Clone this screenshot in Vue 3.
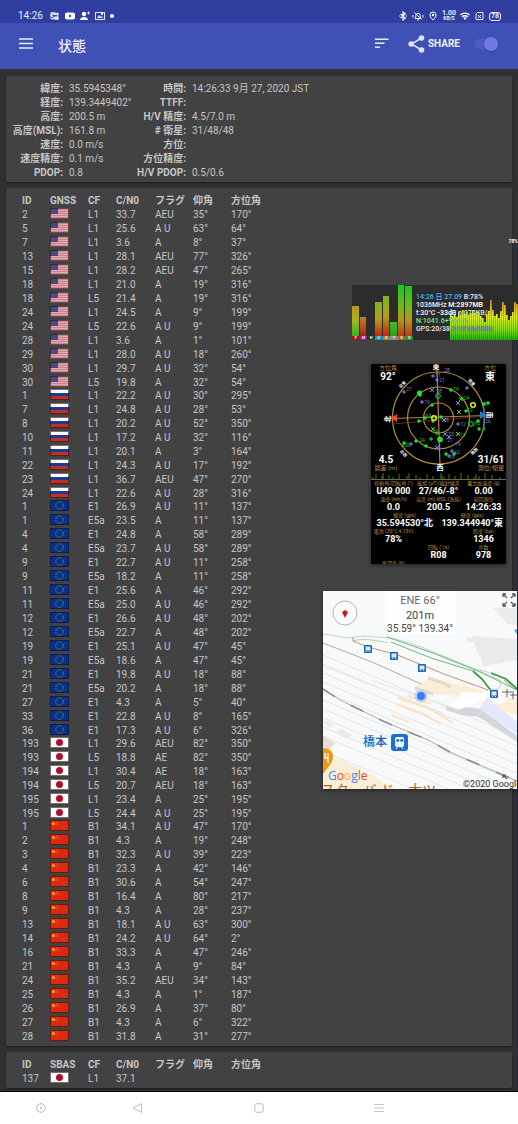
<script setup>
const info = [
  ['緯度:', '35.5945348°', '時間:', '14:26:33 9月 27, 2020 JST'],
  ['経度:', '139.3449402°', 'TTFF:', ''],
  ['高度:', '200.5 m', 'H/V 精度:', '4.5/7.0 m'],
  ['高度(MSL):', '161.8 m', '# 衛星:', '31/48/48'],
  ['速度:', '0.0 m/s', '方位:', ''],
  ['速度精度:', '0.1 m/s', '方位精度:', ''],
  ['PDOP:', '0.8', 'H/V PDOP:', '0.5/0.6'],
]

const parse = (text) => text.trim().split('\n').map((l) => l.trim().split(','))

const gnss = [
  { flag: 'us', name: 'GPS', rows: parse(`2,L1,33.7,AEU,35,170
    5,L1,25.6,A U,63,64
    7,L1,3.6,A,8,37
    13,L1,28.1,AEU,77,326
    15,L1,28.2,AEU,47,265
    18,L1,21.0,A,19,316
    18,L5,21.4,A,19,316
    24,L1,24.5,A,9,199
    24,L5,22.6,A U,9,199
    28,L1,3.6,A,1,101
    29,L1,28.0,A U,18,260
    30,L1,29.7,A U,32,54
    30,L5,19.8,A,32,54`) },
  { flag: 'ru', name: 'GLONASS', rows: parse(`1,L1,22.2,A U,30,295
    7,L1,24.8,A U,28,53
    8,L1,20.2,A U,52,350
    10,L1,17.2,A U,32,116
    11,L1,20.1,A,3,164
    22,L1,24.3,A U,17,192
    23,L1,36.7,AEU,47,270
    24,L1,22.6,A U,28,316`) },
  { flag: 'eu', name: 'Galileo', rows: parse(`1,E1,26.9,A U,11,137
    1,E5a,23.5,A,11,137
    4,E1,24.8,A,58,289
    4,E5a,23.7,A U,58,289
    9,E1,22.7,A U,11,258
    9,E5a,18.2,A,11,258
    11,E1,25.6,A,46,292
    11,E5a,25.0,A U,46,292
    12,E1,26.6,A U,48,202
    12,E5a,22.7,A,48,202
    19,E1,25.1,A U,47,45
    19,E5a,18.6,A,47,45
    21,E1,19.8,A U,18,88
    21,E5a,20.2,A,18,88
    27,E1,4.3,A,5,40
    33,E1,22.8,A U,8,165
    36,E1,17.3,A U,6,326`) },
  { flag: 'jp', name: 'QZSS', rows: parse(`193,L1,29.6,AEU,82,350
    193,L5,18.8,AE,82,350
    194,L1,30.4,AE,18,163
    194,L5,20.7,AEU,18,163
    195,L1,23.4,A,25,195
    195,L5,24.4,A U,25,195`) },
  { flag: 'cn', name: 'BeiDou', rows: parse(`1,B1,34.1,A U,47,170
    2,B1,4.3,A,19,248
    3,B1,32.3,A U,39,223
    4,B1,23.3,A,42,146
    6,B1,30.6,A,54,247
    8,B1,16.4,A,80,217
    9,B1,4.3,A,28,237
    13,B1,18.1,A U,63,300
    14,B1,24.2,A U,64,2
    16,B1,33.3,A,47,246
    21,B1,4.3,A,9,84
    24,B1,35.2,AEU,34,143
    25,B1,4.3,A,1,187
    26,B1,26.9,A,37,80
    27,B1,4.3,A,6,322
    28,B1,31.8,A,31,277`) },
]
const sbas = [{ flag: 'jp', name: 'MSAS', rows: [['137', 'L1', '37.1', '', '', '']] }]
const tables = [
  { kind: 'GNSS', groups: gnss },
  { kind: 'SBAS', groups: sbas },
]
const deg = (v) => (v ? v + '°' : '')

const levels = [
  { k: 'F', h: 30, c: 'a', bg: '#a01818' },
  { k: 'M', h: 19, c: 'b', bg: '#8a1c8a' },
  { k: 'N', h: 0, c: 'a', bg: '#1c3c1c' },
  { k: 'U', h: 34, c: 'c', bg: '#2090b0' },
  { k: 'S', h: 40, c: 'c', bg: '#b07828' },
  { k: 'T', h: 14, c: 'd', bg: '#889088' },
  { k: 'G', h: 52, c: 'e', bg: '#a06820' },
  { k: 'D', h: 50, c: 'e', bg: '#309030' },
]
const history = [27, 24, 26, 23, 28, 25, 30, 26, 28, 25, 27, 30, 27, 26, 28, 24, 22, 18, 26, 29, 40, 30, 24, 26, 22, 29, 38, 35, 25, 20, 24, 28, 38, 36]

const panel = [
  [['仰俯角/回転角 (°)', 'U49 000'], ['磁場 (μT)/磁針偏差', '27/46/-8°'], ['重力加速度 (g)', '0.00']],
  [['速度 (km/h)', '0.0'], ['高度 (m) MSL (海抜)', '200.5'], ['前回測位', '14:26:33']],
  [['緯度 (gps)', '35.594530°北'], ['経度 (gps)', '139.344940°東']],
  [['電池 (30°C 4.13V)', '78%'], ['', ''], ['照度 (lux)', '1346']],
  [['', ''], ['回転 (°/s)', 'R08'], ['歩数', '978']],
  [['角深度 (K)', ''], ['', ''], ['', '']],
]
const compass = [
  ['東', 65, 3, 0], ['南', 118, 51, 90], ['西', 69, 104, 0], ['北', 17, 55, -90],
  ['北東', 31, 20, -45], ['南東', 101, 18, 45], ['南西', 103, 87, -45], ['北西', 33, 89, 45],
]
const sats = [
  [48, 29, 's'], [49, 31, 's'], [80, 26, 's'], [95, 47, 's'], [45, 77, 's'], [33, 79, 's'], [68, 75, 's'], [70, 76, 's'],
  [107, 57, 's'], [108, 65, 's'], [75, 90, 's'], [83, 90, 's'], [61, 41, 's'], [55, 82, 's'], [48, 57, 's'], [62, 57, 's'],
  [54, 54, 's'], [113, 40, 's'], [117, 39, 's'], [67, 32, 'o'], [100, 60, 'o'], [102, 41, 'y'], [63, 54, 'y'], [70, 53, 's'],
  [88, 48, 'x'], [90, 35, 'x'], [87, 70, 'x'], [62, 65, 'x'], [66, 69, 'p'], [60, 75, 'p'],
  [61, 26, 'bx'], [74, 70, 'bx'], [66, 84, 'bx'], [78, 73, 'bx'], [62, 12, 'bp'], [66, 16, 'bp'], [33, 28, 'bp'], [96, 24, 'bp'],
  [51, 38, 'bp'], [87, 60, 'bp'], [78, 92, 'bp'], [87, 39, 'bx'], [40, 80, 'bp'], [81, 87, 'bp'], [73, 56, 'bx'],
]
const satLabels = [
  ['28', 76, 8, 'b'], ['21', 71, 18, 'b'], ['11', 67, 13, 'b'], ['27', 38, 27, 'b'], ['19', 85, 27, 'g'], ['28', 68, 29, 'b'],
  ['19', 56, 40, 'b'], ['e24', 94, 36, 'g'], ['30', 113, 42, 'g'], ['12', 99, 48, 'g'], ['12', 92, 62, 'b'], ['26', 117, 59, 'b'],
  ['j95', 106, 61, 'g'], ['4', 113, 67, 'g'], ['15', 80, 72, 'b'], ['11', 92, 73, 'g'], ['24', 51, 78, 'g'], ['s30', 35, 83, 'g'],
  ['19', 87, 82, 'b'], ['e2', 86, 90, 'b'], ['19', 81, 95, 'b'], ['21', 79, 78, 'b'], ['j94', 57, 54, 'g'], ['28', 75, 58, 'b'], ['25', 67, 85, 'b'], ['12', 64, 69, 'g'],
]
const ticks = [2, 5, 11, 12, 18, 22, 28, 36, 38, 45, 49, 56, 62, 70, 71, 73, 78, 84, 90, 97, 103, 105, 108, 114, 121, 129]
const rails = [0, 9, 18, 27, 36, 45, 54, 63, 72, 81]
</script>

<template>
  <div class="screen">
    <div class="status">
      <span class="clock">14:26</span>
      <svg class="st" width="11" height="10" viewBox="0 0 11 10"><path d="M2 1l8 1-1 3 1 2-1 2-8-1 1-2-1-1z" fill="#dfe4ff" /><path d="M3 4l5 1M2 7l6-3" stroke="#303f9f" /></svg>
      <svg class="st" width="10" height="10" viewBox="0 0 10 10"><rect y="1.5" width="10" height="7" rx="2" fill="#fff" /><path d="M4 3.500v3l3-1.500z" fill="#303f9f" /></svg>
      <svg class="st" width="10" height="10" viewBox="0 0 10 10"><circle cx="4" cy="3" r="2.200" fill="#fff" /><path d="M0 9c0-4 8-4 8 0z" fill="#fff" /><path d="M7 2h3M8.500 .5v3" stroke="#fff" stroke-width=".8" /></svg>
      <svg class="st" width="10" height="10" viewBox="0 0 10 10"><rect x=".5" y="1.500" width="9" height="7" fill="none" stroke="#dfe4ff" /><path d="M2 7l2-3 2 2 1-1 1 2zM6 2h2v2H6z" fill="#dfe4ff" /></svg>
      <i class="dot"></i>
      <span class="grow"></span>
      <svg class="st" width="8" height="10" viewBox="0 0 8 10"><path d="M1.500 3l5 4L4 9V1l2.500 2-5 4M.2 5h.9M7 5h.9" fill="none" stroke="#fff" stroke-width="1.100" /></svg>
      <svg class="st" width="12" height="10" viewBox="0 0 12 10"><path d="M3 7.500h6L8.200 6V4.500a2.200 2.200 0 0 0-4.400 0V6zM2.500 1.500l7 7M1 4v2.500M11 4v2.500M5 9h2" fill="none" stroke="#fff" stroke-width=".9" /></svg>
      <svg class="st" width="8" height="10" viewBox="0 0 8 10"><path d="M4 9C2 7.200 1 5.700 1 4a3 3 0 0 1 6 0c0 1.700-1 3.200-3 5z" fill="none" stroke="#fff" /><circle cx="4" cy="4" r="1.200" fill="#fff" /></svg>
      <span class="rate"><b>1.00</b><small>KB/S</small></span>
      <svg class="st" width="10" height="10" viewBox="0 0 10 10"><path d="M.5 4a6.500 6.500 0 0 1 9 0M2 6a4.200 4.200 0 0 1 6 0" fill="none" stroke="#fff" stroke-width="1.300" /><path d="M3.400 7a2.200 2.200 0 0 1 3.200 0L5 9z" fill="#fff" /></svg>
      <svg class="st" width="9" height="10" viewBox="0 0 9 10"><path d="M1 3l1.500-1.500H8v7H1z" fill="none" stroke="#dfe4ff" /><path d="M3 4l3 3M6 4L3 7" stroke="#fff" stroke-width=".9" /></svg>
      <span class="batt">78</span>
    </div>

    <header class="bar">
      <button class="icon" aria-label="メニュー">
        <svg width="14" height="11" viewBox="0 0 14 11"><path d="M0 1h14M0 5.500h14M0 10h14" stroke="#e8ebff" stroke-width="1.600" /></svg>
      </button>
      <h1>状態</h1>
      <span class="grow"></span>
      <button class="icon sort" aria-label="並べ替え">
        <svg width="14" height="11" viewBox="0 0 14 11"><path d="M0 1.200h13.500M0 5.200h9.500M0 9.200h5" stroke="#e8ebff" stroke-width="1.500" /></svg>
      </button>
      <button class="share">
        <svg width="17" height="18" viewBox="0 0 17 18"><path d="M13.500 3L3.500 9l10 6" fill="none" stroke="#dfe4ff" stroke-width="1.500" /><g fill="#dfe4ff"><circle cx="13.500" cy="3" r="2.800" /><circle cx="3.200" cy="9" r="2.800" /><circle cx="13.500" cy="15" r="2.800" /></g></svg>
        SHARE
      </button>
      <input class="switch" type="checkbox" checked aria-label="GPS" />
    </header>

    <main>
      <section class="card">
        <table class="info">
          <tbody>
            <tr v-for="r in info" :key="r[0]">
              <th scope="row">{{ r[0] }}</th><td>{{ r[1] }}</td>
              <th scope="row">{{ r[2] }}</th><td>{{ r[3] }}</td>
            </tr>
          </tbody>
        </table>
      </section>

      <section v-for="t in tables" :key="t.kind" class="card">
        <table class="sats" :class="t.kind">
          <thead>
            <tr><th>ID</th><th>{{ t.kind }}</th><th>CF</th><th>C/N0</th><th>フラグ</th><th>仰角</th><th>方位角</th></tr>
          </thead>
          <tbody v-for="g in t.groups" :key="g.name">
            <tr v-for="(r, i) in g.rows" :key="i">
              <td>{{ r[0] }}</td>
              <td class="fl">
                <svg width="19" height="11" viewBox="0 0 19 11" role="img" :aria-label="g.name">
                  <template v-if="g.flag === 'us'">
                    <rect width="19" height="11" fill="#e0a8b0" />
                    <path d="M0 1.500h19M0 3.500h19M0 5.500h19M0 7.500h19M0 9.500h19" stroke="#cc7886" stroke-width=".8" />
                    <rect width="8" height="6" fill="#4a4a80" />
                  </template>
                  <template v-else-if="g.flag === 'ru'">
                    <rect width="19" height="11" fill="#fff" /><rect y="4" width="19" height="4" fill="#1c3a9c" /><rect y="7" width="19" height="4" fill="#c03028" />
                  </template>
                  <template v-else-if="g.flag === 'eu'">
                    <rect width="19" height="11" fill="#08318f" /><circle cx="9.500" cy="5.500" r="3.700" fill="none" stroke="#8a9a68" stroke-width="1" stroke-dasharray="1 .94" />
                  </template>
                  <template v-else-if="g.flag === 'jp'">
                    <rect width="19" height="11" fill="#fff" /><circle cx="9.500" cy="5.500" r="3.500" fill="#b40a2c" />
                  </template>
                  <template v-else>
                    <rect width="19" height="11" fill="#dc2a10" /><path d="M3.500 1.500l.6 1.300 1.400.1-1 1 .3 1.400-1.300-.7-1.300.7.3-1.400-1-1 1.400-.1z" fill="#ffb818" /><path d="M6.500 1.500l1 .8.2 1.500-1.200 1.500" fill="none" stroke="#f09018" stroke-width=".9" stroke-dasharray="1 .6" />
                  </template>
                  <rect x=".5" y=".5" width="18" height="10" fill="none" stroke="#181010" stroke-opacity=".6" />
                </svg>
              </td>
              <td>{{ r[1] }}</td><td>{{ r[2] }}</td><td>{{ r[3] }}</td><td>{{ deg(r[4]) }}</td><td>{{ deg(r[5]) }}</td>
            </tr>
          </tbody>
        </table>
      </section>

      <span class="edge-label">78%</span>
      <i class="edge-line"></i>

      <aside class="monitor">
        <div class="levels">
          <div v-for="l in levels" :key="l.k" class="lv">
            <i :class="l.c" :style="{ height: l.h + 'px' }"></i>
            <b :style="{ background: l.bg }">{{ l.k }}</b>
          </div>
        </div>
        <svg class="hist" width="68" height="55" viewBox="0 0 68 55">
          <defs><linearGradient id="heat" x1="0" y1="13" x2="0" y2="55" gradientUnits="userSpaceOnUse"><stop offset="0" stop-color="#d87018" /><stop offset=".25" stop-color="#e8c020" /><stop offset=".45" stop-color="#e4f020" /><stop offset=".75" stop-color="#88e018" /><stop offset="1" stop-color="#20b018" /></linearGradient></defs>
          <rect v-for="(h, i) in history" :key="i" :x="i * 2" :y="55 - h" width="1.700" :height="h" fill="url(#heat)" />
        </svg>
        <div class="stats">
          <div><span class="sky">14:26 日 27.09</span> B:78%</div>
          <div>1036MHz <b>M:2897MB</b></div>
          <div>t:30°C <b>-33dB</b> <span class="pale">n:070KB/s</span></div>
          <div class="mint">N:1041.6+95.3%</div>
          <div>GPS:20/38 <span class="violet">S:+516/608B</span></div>
        </div>
      </aside>

      <aside class="gps">
        <svg class="radar" width="135" height="116" viewBox="0 0 135 116">
          <g fill="none" stroke="#b08a3c" stroke-width="1.200"><circle cx="67.500" cy="54" r="46" /><circle cx="67.500" cy="54" r="31" /><circle cx="67.500" cy="54" r="15" /><path d="M66 6l3 96M20 54.500l96-3" /></g>
          <path d="M21 60l94-8" stroke="#8a3028" stroke-width=".8" />
          <path d="M26 50v8l-6-4z" fill="#f04838" /><path d="M109 47v8l6-4z" fill="#2878d8" /><path d="M113 43v22" stroke="#2878d8" />
          <g v-for="(s, i) in sats" :key="i" :transform="`translate(${s[0]} ${s[1]})`">
            <circle v-if="s[2] === 's'" r="1.700" fill="#18e828" />
            <circle v-else-if="s[2] === 'o'" r="2.300" fill="none" stroke="#18e828" />
            <circle v-else-if="s[2] === 'y'" r="2.300" fill="none" stroke="#d8f020" stroke-width="1.500" />
            <path v-else-if="s[2] === 'x'" d="M-2-2l4 4M2-2l-4 4" stroke="#18e828" />
            <path v-else-if="s[2] === 'p'" d="M-2 0h4M0-2v4" stroke="#18e828" />
            <path v-else-if="s[2] === 'bx'" d="M-2-2l4 4M2-2l-4 4" stroke="#8088e0" />
            <path v-else d="M-2 0h4M0-2v4" stroke="#8088e0" />
          </g>
          <circle cx="69" cy="75.500" r="2.700" fill="#18e828" /><circle cx="48.500" cy="29" r="2.500" fill="#18e828" />
          <text v-for="(s, i) in satLabels" :key="'l' + i" :x="s[1]" :y="s[2]" class="sl" :class="s[3]">{{ s[0] }}</text>
          <text v-for="c in compass" :key="c[0]" class="dir" :class="{ two: c[0].length > 1 }" :transform="`translate(${c[1]} ${c[2]}) rotate(${c[3]})`" y="2">{{ c[0] }}</text>
          <text class="lab" x="17" y="6">方位角</text><text class="val" x="17" y="16">92°</text>
          <text class="lab" x="119" y="6">方位</text><text class="val" x="119" y="16">東</text>
          <text class="val" x="15" y="99">4.5</text><text class="lab" x="15" y="106">誤差 (m)</text>
          <text class="val" x="120" y="99">31/61</text><text class="lab" x="120" y="106">測位/衛星</text>
          <path d="M0 115.500h135" stroke="#8a8a60" stroke-width=".8" />
          <path v-for="(x, i) in ticks" :key="'t' + x" :d="`M${x} 115v-${2 + (i * 3) % 5}`" :stroke="i % 3 ? '#3f9a4c' : '#9a8040'" stroke-width=".8" />
        </svg>
        <div v-for="(row, i) in panel" :key="i" class="prow">
          <div v-for="(c, j) in row" :key="j" class="pc"><small>{{ c[0] }}</small><b>{{ c[1] }}</b></div>
        </div>
      </aside>

      <aside class="map">
        <svg width="194" height="198" viewBox="0 0 194 198">
          <rect width="194" height="198" fill="#f8f9fa" />
          <g stroke="#e3e5e8" fill="none"><path v-for="r in rails" :key="r" :d="`M0 ${64 + r}L194 ${146 + r}`" /><path d="M0 160L90 198M50 90L194 138M0 75L120 122" /></g>
          <g fill="#e9eaec"><path d="M148 45l46 3v21l-33 6zM170 17h24v17l-9-1zM144 45l8 4-3 3-6-1zM13 141l6-3 10 6-5 4zM0 131l3-1 9 4-5 3z" /></g>
          <path d="M0 145l13 7-7 6-6-2z" fill="#e6ddd2" />
          <path d="M0 172l15-5 36 18 20 13H0zM91 96l14-9 16 3 73 18v16l-20-6-14-6-30-8-18-1z" fill="#fbeed6" />
          <path d="M105 87l15 5 8 4M92 97l18 6" stroke="#e4dac8" stroke-width="3" fill="none" />
          <path d="M126 114l10-6 1-7 22 1 8-6 18 14-8 3-22-3-12 8-10-1z" fill="#fff" />
          <path d="M123 115l12 4 8-3 15 2 36 27v6l-38-25-18-2-15-5z" fill="#d5d6da" />
          <path d="M164 106l30 25v12l-38-25z" fill="#e4e8fa" />
          <path d="M75 107l30 10 25 15M73 113l25 9 20 11M68 124l18 7M84 105l24 8" fill="none" stroke="#fae4bd" stroke-width="2" />
          <path d="M0 43L25 47 40 45 68 47Q90 52 108 60L152 78 178 90M30 50Q40 46 65 52" fill="none" stroke="#bcdcc2" stroke-width="1.200" />
          <path d="M64 46L110 62 155 80 194 99M68 51L108 67 150 80" fill="none" stroke="#6eb47c" stroke-width="1" />
          <path d="M150 80l9 8 10 13M168 82l15 6 11 10" stroke="#30a040" stroke-width="1.800" fill="none" />
          <path d="M30 46v4Q45 57 72 63L121 83 165 99M181 89l10 9" fill="none" stroke="#c58f70" stroke-width="1" />
          <path d="M155 79c8 0 17 5 22 13 2 5-5 9-9 5" fill="none" stroke="#c3c5ce" stroke-width=".9" />
          <path d="M0 52Q50 70 98 93M0 98l17 11 45 22 43 18 24 13 65 28" fill="none" stroke="#a0a2a6" stroke-width=".9" />
          <path d="M0 98l17 11 45 22 43 18 24 13 65 28" fill="none" stroke="#8c8e92" stroke-width="1.600" stroke-dasharray="14 18" />
          <rect x="62" y="0" width="71" height="44" fill="#fff" fill-opacity=".8" />
          <g class="read"><text x="97" y="13" fill="#666">ENE 66°</text><text x="97" y="28">201m</text><text class="pos" x="97" y="41">35.59° 139.34°</text></g>
          <circle cx="22" cy="22" r="12" fill="#fdfdfd" stroke="#b4b4b4" /><path d="M19 21l3-2 3 2-3 6z" fill="#c81818" /><path d="M22 18l3 3-3-1z" fill="#999" />
          <path d="M184 7l-4-4M180 6V3h3M188 7l4-4M189 3h3v3M184 11l-4 4M180 12v3h3M188 11l4 4M192 12v3h-3" fill="none" stroke="#555" stroke-width="1.300" />
          <g v-for="b in [[45, 58], [71, 65], [99, 77], [171, 103]]" :key="b[0]" :transform="`translate(${b[0]} ${b[1]})`"><rect x="-4" y="-4" width="8" height="8" rx="1" fill="#1b66bc" /><rect x="-2.500" y="-2.500" width="5" height="4" fill="#dfeaf8" /><path d="M-2 2.500h1M1 2.500h1" stroke="#fff" /></g>
          <circle cx="98" cy="105" r="6.500" fill="#b8cff8" /><circle cx="98" cy="105" r="4" fill="#3d7bea" />
          <path d="M179 101h10M184 98v8M187 104h7M190 100v8" stroke="#555" stroke-width=".9" />
          <path d="M194 38l-3 1 3 4z" fill="#62a0f0" />
          <text class="town" x="40" y="155">橋本</text>
          <rect x="68" y="143" width="17" height="17" rx="3" fill="#1b6fd0" /><rect x="72" y="146" width="9" height="10" rx="2" fill="#fff" /><path d="M73.500 148.500h2.500v2h-2.500zM77.500 148.500H80v2h-2.500zM74 153h1M78 153h1" fill="#1b6fd0" stroke="#1b6fd0" stroke-width=".5" /><path d="M73 158l1.500-2M80 158l-1.500-2" stroke="#fff" />
          <path d="M0 157c6 0 10 3 10 9 0 5-4 9-10 17z" fill="#f09810" /><path d="M5 162v10M2 162v5h3" stroke="#fff" stroke-width="1.300" fill="none" />
          <text class="shop" x="-2" y="204">スターバ ド・大ツ</text>
          <text class="google" x="5" y="189"><tspan fill="#4285f4">G</tspan><tspan fill="#ea4335">o</tspan><tspan fill="#fbbc05">o</tspan><tspan fill="#4285f4">g</tspan><tspan fill="#34a853">l</tspan><tspan fill="#ea4335">e</tspan></text>
          <text class="copy" x="140" y="196">©2020 Google</text>
          <path d="M184 188l-4-4M180 187v-3h3" fill="none" stroke="#555" stroke-width="1.200" />
        </svg>
      </aside>
    </main>

    <nav>
      <button aria-label="アシスト"><svg width="10" height="10" viewBox="0 0 10 10"><circle cx="5" cy="5" r="4.300" fill="none" stroke="#bdbdbd" /><circle cx="5" cy="5" r="1" fill="#b0b0b0" /></svg></button>
      <button aria-label="戻る"><svg width="11" height="10" viewBox="0 0 11 10"><path d="M9.500.6v8.800L1 5z" fill="none" stroke="#bdbdbd" /></svg></button>
      <button aria-label="ホーム"><svg width="10" height="10" viewBox="0 0 10 10"><rect x=".8" y=".8" width="8.400" height="8.400" rx="1.500" fill="none" stroke="#bdbdbd" /></svg></button>
      <button aria-label="履歴"><svg width="10" height="10" viewBox="0 0 10 10"><path d="M0 1.500h10M0 5h10M0 8.500h10" stroke="#c4c4c4" /></svg></button>
    </nav>
  </div>
</template>

<style>
body { background: #fff; }
</style>

<style scoped>
.screen { font-family: Roboto, "Noto Sans CJK JP", sans-serif; font-size: 10px; line-height: 14px; color: #c6c6c6; overflow: hidden; }
button { border: 0; padding: 0; background: none; font: inherit; color: inherit; display: flex; align-items: center; justify-content: center; }
svg { display: block; flex: none; }
.grow { flex: 1; }
.status { height: 23px; box-sizing: border-box; padding: 9px 17px 0 18px; display: flex; align-items: center; gap: 5px; background: #303f9f; color: #e8ebff; }
.clock { width: 26px; }
.dot { width: 4px; height: 4px; border-radius: 2px; background: #fff; }
.rate { display: grid; width: 13px; line-height: 5px; text-align: center; font-size: 7px; }
.rate small { font-size: 5px; font-weight: 700; }
.batt { font-size: 7px; font-weight: 700; line-height: 7px; border: 1px solid #e8ebff; border-radius: 3px; padding: 0 1px; }
.bar { height: 46px; box-sizing: border-box; padding: 0 20px 5px 19px; display: flex; align-items: center; background: #3f51b5; color: #f0f2ff; }
h1 { font-size: 14px; font-weight: 500; line-height: 20px; margin: 5px 0 0 25px; }
.sort { margin-right: 19px; }
.share { gap: 3px; font-weight: 700; margin-right: 14px; }
.switch { appearance: none; position: relative; width: 24px; height: 14px; margin: 0; }
.switch::before { content: ""; position: absolute; inset: 2px 2px 2px 0; border-radius: 5px; background: #4a5bc8; }
.switch::after { content: ""; position: absolute; right: 0; top: 0; width: 14px; height: 14px; border-radius: 50%; background: #7478e4; box-shadow: 0 1px 2px #0003; }
main { position: relative; display: flex; flex-direction: column; gap: 6px; padding: 7px 6px 3px; background: #303030; border-bottom: 1px solid #000; }
.card { background: #424242; border-radius: 2px; box-shadow: 0 1px 2px #0006; padding: 6px 0 2px; }
table { border-collapse: collapse; table-layout: fixed; }
th, td { padding: 0; height: 14px; line-height: 14px; white-space: nowrap; text-align: left; vertical-align: top; }
th { font-weight: 700; }
.info { width: 100%; }
.info th { width: 57px; text-align: right; }
.info th:nth-child(3) { width: 53px; }
.info td { padding-left: 6px; }
.info td:nth-child(2) { width: 64px; }
.sats { width: 272px; margin-left: 16px; }
.GNSS { margin-bottom: 1px; }
.sats th:nth-child(1) { width: 28px; }
.sats th:nth-child(2) { width: 38px; }
.sats th:nth-child(3) { width: 28px; }
.sats th:nth-child(4) { width: 39px; }
.sats th:nth-child(5), .sats th:nth-child(6) { width: 38px; }
.GNSS tbody tr:last-child td { height: 13px; line-height: 13px; }

.edge-label { position: absolute; right: 0; top: 168px; font-size: 5px; line-height: 8px; color: #fff; font-weight: 700; }
.edge-line { position: absolute; right: 0; top: 175px; bottom: 0; width: 1px; background: #1c1c9c; }
.monitor { position: absolute; right: 0; top: 216px; width: 166px; height: 55px; background: #2c2c2c; overflow: hidden; }
.levels { display: flex; width: 61px; height: 55px; }
.lv { flex: 1; display: flex; flex-direction: column; justify-content: flex-end; }
.lv i { border-right: 1px solid #2c2c2c; }
.lv b { font-size: 4px; line-height: 4px; height: 4px; text-align: center; color: #eee; }
.a { background: linear-gradient(#c89418, #a0b818 50%, #38b020); }
.b { background: linear-gradient(#b08820, #c05018 50%, #a82010); }
.c { background: linear-gradient(#7cb820, #b0a018 50%, #c02810); }
.d { background: linear-gradient(#40c028, #28a018); }
.e { background: linear-gradient(#10cc18, #78b818 45%, #b89018 70%, #c03810); }
.hist { position: absolute; right: 0; bottom: 0; }
.stats { position: absolute; left: 64px; top: 8px; font-size: 7px; line-height: 8px; color: #f4f4f4; font-weight: 500; white-space: nowrap; text-shadow: 0 0 1px #0008; }
.sky { color: #58bce8; }
.pale { color: #e8f0b8; }
.mint { color: #7cf09c; }
.violet { color: #8484c8; }

.gps { position: absolute; right: 12px; top: 295px; width: 135px; height: 200px; background: #000; overflow: hidden; box-shadow: 0 1px 4px #0008; }
.radar text { text-anchor: middle; }
.lab { font-size: 6px; fill: #b08a40; }
.val { font-size: 10px; font-weight: 700; fill: #fff; }
.dir { font-size: 7px; font-weight: 700; fill: #fff; }
.dir.two { font-size: 4px; }
.sl { font-size: 5px; }
.sl.b { fill: #7a82d8; }
.sl.g { fill: #20c830; }
.prow { display: flex; height: 16px; }
.pc { flex: 1 1 0; min-width: 0; display: flex; flex-direction: column; align-items: center; white-space: nowrap; }
.pc small { font-size: 5px; line-height: 6px; height: 6px; color: #b08a40; }
.pc b { font-size: 9px; line-height: 10px; height: 10px; color: #fff; }

.map { position: absolute; right: 1px; top: 522px; box-shadow: 0 1px 4px #0008; }
.read { font-size: 11px; text-anchor: middle; fill: #444; }
.pos { font-size: 10px; }
.town { font-size: 12px; font-weight: 500; fill: #1b66bc; }
.shop { font-size: 14px; fill: #a86a28; }
.google { font-size: 12px; font-family: "Open Sans", sans-serif; }
.copy { font-size: 9px; fill: #333; }

nav { height: 32px; display: grid; grid-template-columns: 82fr 110fr 134fr 106fr 86fr; background: #fff; }
</style>
